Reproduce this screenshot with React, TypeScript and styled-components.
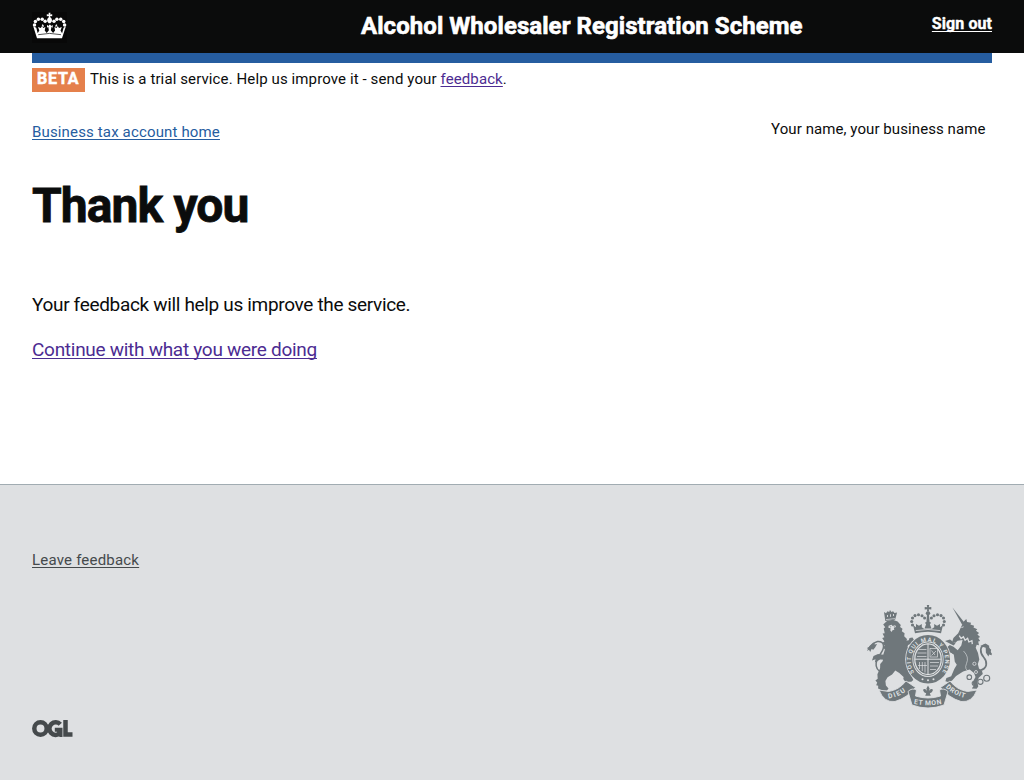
import React from "react";
import styled, { createGlobalStyle } from "styled-components";

const GlobalStyle = createGlobalStyle`
  * { box-sizing: border-box; }
  body {
    margin: 0;
    background: #fff;
    color: #0b0c0c;
    font-family: Roboto, "Liberation Sans", sans-serif;
  }
  h1, p { margin: 0; }
`;

const Page = styled.div`
  display: flex;
  flex-direction: column;
  height: 780px;
  overflow: hidden;
`;

const Header = styled.header`
  display: grid;
  grid-template-columns: 329px 1fr auto;
  height: 53px;
  padding: 0 32px;
  background: #0b0c0c;
  color: #fff;
`;

const CrownBox = styled.div`
  width: 35px;
  height: 31px;
  margin-top: 12px;
  background: #080808;
`;

const ServiceName = styled.div`
  font-size: 24px;
  font-weight: 700;
  line-height: 30px;
  padding-top: 11px;
  white-space: nowrap;
  letter-spacing: 0.06px;
  -webkit-text-stroke: 0.6px currentColor;
`;

const Link = styled.a<{ $color: string }>`
  color: ${(p) => p.$color};
  text-decoration: underline;
  text-decoration-thickness: 1px;
  text-underline-offset: 2px;
  text-decoration-skip-ink: none;
`;

const SignOut = styled.div`
  padding-top: 14px;
  font-size: 16px;
  line-height: 20px;
  font-weight: 700;
  letter-spacing: 0.07px;
  white-space: nowrap;
  -webkit-text-stroke: 0.4px currentColor;
`;

const Main = styled.main`
  height: 431px;
  padding: 0 32px;
`;

const BlueBar = styled.div`
  height: 10px;
  background: #265da0;
`;

const PhaseBanner = styled.div`
  display: flex;
  padding-top: 5px;
  height: 29px;
`;

const PhaseTag = styled.strong`
  width: 53px;
  height: 24px;
  padding-left: 5px;
  background: #e5804b;
  color: #fff;
  font-size: 16px;
  line-height: 22px;
  letter-spacing: 0.8px;
  -webkit-text-stroke: 0.5px currentColor;
`;

const Text = styled.p<{ $size: number; $track: number; $line: number }>`
  font-size: ${(p) => p.$size}px;
  line-height: ${(p) => p.$line}px;
  letter-spacing: ${(p) => p.$track}px;
  white-space: nowrap;
`;

const PhaseText = styled(Text)`
  margin-left: 5px;
`;

const AccountRow = styled.div`
  display: flex;
  justify-content: space-between;
  padding: 27px 6.5px 0 0;
`;

const HomeLink = styled(Text)`
  padding-top: 3px;
`;

const Heading = styled.h1`
  margin-top: 39px;
  font-size: 48px;
  line-height: 50px;
  font-weight: 700;
  letter-spacing: -0.9px;
  -webkit-text-stroke: 0.8px currentColor;
`;

const Body = styled.div`
  display: grid;
  gap: 20px;
  margin-top: 61px;
`;

const Footer = styled.footer`
  flex: 1;
  display: flex;
  justify-content: space-between;
  padding: 63px 31px 0 32px;
  border-top: 1px solid #a1acb2;
  background: #dee0e2;
  color: #454a4c;
`;

const FooterLeft = styled.div`
  display: flex;
  flex-direction: column;
  gap: 147px;
`;

const Arms = styled.svg`
  display: block;
  margin-top: 55px;
`;

const Plain = styled.svg`
  display: block;
`;

function Crown() {
  const pearls = [
    [34.5, 25], [35.4, 21.4], [38.4, 19.3], [42.2, 19.3], [45.1, 21.2],
    [64.6, 25], [63.7, 21.4], [60.7, 19.3], [56.9, 19.3], [54, 21.2],
  ];
  return (
    <Plain width="35" height="31" viewBox="32 12 35 31" fill="#fff">
      {pearls.map(([x, y]) => (
        <circle key={`${x}-${y}`} cx={x} cy={y} r="1.75" />
      ))}
      <path d="M48.6 12.8h1.9l-.3 1.8 2-.3v2l-2-.3.3 1.6a2.5 2.9 0 0 1 .5 5l-.7.7h-1.5l-.7-.7a2.5 2.9 0 0 1 .5-5l.2-1.6-2 .3v-2l2 .3z" />
      <path d="M33.2 26.3l3.8 12h25l3.9-12-2.3 1.4-1.5 5.5-1.6-2.8 1.3-3.4-2.8 1-1.3-2-1.1 2-2.2-.9.7 3.3-2 2.5-2.3-2.6.8-3.8 1.1 1.4v-3l-1.5 1-.8-1.1-1.2-.1-.5 1.2-1.7-1v3l1.2-1.4.7 3.8-2.2 2.6-2-2.5.7-3.3-2.2.9-1.1-2-1.3 2-2.8-1 1.3 3.4-1.6 2.8-1.4-5.5z" />
      <path d="M38.2 34.7q11.4-2.6 22.8 0" fill="none" stroke="#0b0c0c" strokeWidth=".7" />
      <path d="M42.3 24.6l1.2 2M56.8 24.6l-1.2 2" stroke="#fff" strokeWidth="1.4" />
    </Plain>
  );
}

function RoyalArms() {
  const grey = "#6f777b";
  const paper = "#dee0e2";
  const crownPearls = [
    [912.5, 625], [911.7, 621.5], [912.5, 618], [915, 615.6], [918.5, 614.8], [922, 615.8], [924.6, 618],
    [943.5, 625], [944.3, 621.5], [943.5, 618], [941, 615.6], [937.5, 614.8], [934, 615.8], [931.4, 618],
  ];
  return (
    <Arms width="127" height="106" viewBox="866 603 127 106" fill={grey}>
      <defs>
        <path id="garter" d="M914.2 672.500a17.200 19.400 0 1 1 27.600 0" />
        <path id="dieu" d="M888.500 698.500Q900 697 910 688" />
        <path id="mon" d="M913.800 703.800q14.200 3 28.400 0" />
        <path id="droit" d="M945.500 687.500Q955 696.500 968.500 698.500" />
      </defs>

      {/* lion */}
      <path d="M884 612l2 1.300 1.500-2 1.700.8.800-2 1.400 1.900 1.700-.8 1.400 1.800 2.600-.5-2 7.200-9.800 1.200z" />
      <path d="M887.500 615v2M890.500 614.300v2.500M893.500 614v2" stroke={paper} strokeWidth=".9" />
      <path d="M886 619.600l9-1" stroke={paper} strokeWidth=".7" />
      <path d="M887 621l5.800-1.300 4.800 1.800 3.200 3.400-.7 2.100 2.400 1.800-.7 2.500 2.800 2-.4 3 2.800 2.700-.7 2.700 2 2.400-.8 2.800 1.400 2.500-1.200 3-.9 6 .3 6 1.200 7 3.500 5 1.500 3.500-2 1.900-6-.1-2-2.600.3-2.200-4.300-4-4-2.500-3.200 4-4.500 2.800-2.200 3.700.5 4.500 2.600 3-1.500 2.200-5-.1-3.900-2.100.1-2.700-2-.5 1-2.600-1.800-2.100 2.300-1.800-.3-4.500 2.700-6 .1-4.300 2.600-2.900.5-6.500 1.600-5-2-2.200 1.800-1.500-2.300-3 2-1.300-2.200-3.600 2.200-.7-1.800-3.800 2.100-.2-1-4.700 1.500-1.200-2-2.800z" />
      <path d="M888.600 625.800l3-1 1 1.200 2.600-.8.800 1.700-2.200.9.500 2-1.800.4-.9 1.900-1.300-1.500.3-2.300-2.200-.5z" fill={paper} />
      <path d="M889.600 626.500h1.800l-.8 1zM893.500 626.400l1.600-.2-.8 1z" />
      <path d="M885.500 655l-7.500-1-4.500 2-1.500 4.500 3.500-1.200-.6 3.200 5.200-3 5 .3M905 646l6-2 3-4-1.500-2.500-3 .5-.7 2.200-5.500 1z" />
      <path d="M882.600 673C871.500 668 877 659 881 653s3.500-12-3.500-11.500c-5 .8-5.500 5.800-10 7" fill="none" stroke={grey} strokeWidth="1.500" />
      <path d="M867 651l2.500-5 4-3.700 1.300 2.300 2.300-.7-2 3.600-1.800 2.300-1.700-.7-1.400 2.800-1.200-2.200z" />

      {/* unicorn */}
      <path d="M952.500 607.500l12.200 15.500-2.500 1.800z" />
      <path d="M963.500 621.700l2.800-2.700.8 3 4 .7-.7 1.800 3.700 1.300-.6 1.800 3.800 1.700-1.400 1.500 3.200 2.200-1.700 1.400 2.700 2.700-1.800.8 1.800 3-1.900.6.800 3.800-2.300-.5-1 3 2.300 5.200 1.300 6.500-1.500 4.500 1.200 4.600 3 2.300.8 3.100-4.100 3.700-1.300 4.200.9 4.600-1.700 2.300-4.800-.2 1.700-2.500-.7-4.200 2.700-5-1.500-3.900-4.400-3.400-6.500 2-7 4.500-4 4.300-3.200 1.800-3.500-1 1-3.300 4.800-1.700 3.100-7.300 2.500-4.100-2-3-1-7.200-3-2.200-4-1.200-1-3 4-3.200 3.700 1.700 4.200 3.500 3.600-4.600 1.300-5.500-5 .6-2.500 2.300-2.800-1.600 1.100-3.400 4.800-4.800z" />
      <path d="M961.400 627.600l2.200-.8" stroke={paper} strokeWidth=".9" />
      <path d="M959.300 635.700l1.800 2.800 2.300-1.800 1.700 3.500 2.500-1.900 1.300 3.700 3-1.300.4 3.400" fill="none" stroke={paper} strokeWidth="1.300" />
      <path d="M963.500 651q6 6 3 12.500t4 8.500" fill="none" stroke={paper} strokeWidth=".6" />
      <path d="M944 650l5-3 6 3 3 4-3 1-5-3-3 1zM945 641l5-1.500 5.500 4-2 2z" />
      <path d="M979.700 670.500c8-1.800 8-8.500 4-13.200s-4.500-12.200 2.200-12c4.600.2 1.400 6.500 5.400 9" fill="none" stroke={grey} strokeWidth="1.700" />
      <path d="M980.200 646l5.200-2.500 4 2.400-.8 1.600 2.600 2.200-.5 1.600 1.200 4-2.700-.9-.8 2-2.500-3.600-.2-5z" />
      <g fill="none" stroke={paper} strokeWidth=".8">
        <circle cx="974.400" cy="663.800" r="1.600" />
        <circle cx="976" cy="672" r="1.500" />
      </g>

      {/* crown */}
      <path d="M926.800 605h2.400l-.4 2.300 2.500-.4v2.700l-2.500-.4.3 2.400h-2.200l.3-2.400-2.500.4v-2.700l2.500.4z" />
      <ellipse cx="928" cy="613.300" rx="2.200" ry="2" />
      <path d="M927 614.500h2l.6 7.500 1.500.7-1.200 1.500 1.600 4.300h-7l1.600-4.300-1.200-1.500 1.500-.7z" />
      {crownPearls.map(([x, y]) => (
        <circle key={`${x}-${y}`} cx={x} cy={y} r="1.550" />
      ))}
      <path d="M913 625l3 2.300v-3.200l3 1.600 2.800-1.600v3.200l2.500 1.600h7.400l2.500-1.600v-3.200l2.800 1.600 3-1.600v3.200l3-2.300-2 8.300q-13-3-26 0z" />
      <path d="M915.800 630.600q12.200-2.300 24.400 0" fill="none" stroke={paper} strokeWidth=".8" />

      {/* garter and shield */}
      <ellipse cx="928" cy="659.200" rx="22.800" ry="25.200" fill={paper} />
      <ellipse cx="928" cy="659.200" rx="18.800" ry="21" fill="none" stroke={grey} strokeWidth="6.400" />
      <text fontSize="5.800" fontWeight="700" fontFamily="Roboto, sans-serif" fill={paper}>
        <textPath href="#garter" textLength="81">SOIT QUI MAL Y PENSE</textPath>
      </text>
      <ellipse cx="928" cy="659.200" rx="14.300" ry="16.500" fill="none" stroke={grey} strokeWidth=".9" />
      <ellipse cx="928" cy="659.200" rx="12.600" ry="14.800" />
      <path d="M928 644v30M915 659.200h26" stroke={paper} strokeWidth="1" />
      <g stroke={paper} strokeWidth=".7" fill="none">
        <path d="M918.500 649.500h8M917.500 653h9M917 656.500h9.500M919.500 662v7M922.300 662v9M925 662v10.500M918 665.500h9" />
        <rect x="930" y="648.500" width="7.500" height="8.500" />
        <path d="M931.500 655.500l4.500-4.500M931.500 650.500l3.500 4.500M930 662.500h9M930 666h8M930 669.500h6" />
      </g>
      <circle cx="922.500" cy="679.300" r="1" fill={paper} />
      <circle cx="928" cy="680.200" r="1" fill={paper} />
      <circle cx="933.500" cy="679.300" r="1" fill={paper} />

      {/* motto ribbon */}
      <g stroke={paper} strokeWidth=".9">
        <path d="M879 690L888.500 691.500Q899 690 906 681L915.500 687.500Q907 698 895 701.500Q884 703 879 690Z" />
        <path d="M977 690L967.500 691.500Q957 690 950 681L940.500 687.500Q949 698 961 701.500Q972 703 977 690Z" />
        <path d="M908 691.500Q912 687.500 916.500 690L915.500 696Q928 700 940.500 696L939.500 690Q944 687.500 948 691.500L944 705Q928 711 912 705Z" />
      </g>
      <path d="M928 685.500l1.600 3-.7 2.600q1.300-2.800 3.300-2 1.600 1.300-.7 3.300l-1.700.8 1 2.600h-5.600l1-2.600-1.700-.8q-2.300-2-.7-3.300 2-.8 3.300 2l-.7-2.600z" />
      <g fontSize="6.800" fontWeight="700" fontFamily="Roboto, sans-serif" fill={paper}>
        <text><textPath href="#dieu" textLength="19">DIEU</textPath></text>
        <text><textPath href="#mon" textLength="28">ET MON</textPath></text>
        <text><textPath href="#droit" textLength="22">DROIT</textPath></text>
      </g>

      {/* chain */}
      <g fill="none" stroke={grey} strokeWidth="1.100">
        <circle cx="969.300" cy="677.200" r="2.300" />
        <circle cx="974.200" cy="683.200" r="2" />
        <circle cx="980.400" cy="681.800" r="2.600" />
        <circle cx="986.700" cy="678.300" r="3" />
      </g>
    </Arms>
  );
}

function OglLogo() {
  return (
    <Plain width="41" height="18" viewBox="0 0 41 18" fill="none" stroke="#454a4c" strokeWidth="4.500">
      <circle cx="8.500" cy="8.500" r="6.200" />
      <path d="M28.300 4.300A6.300 6.300 0 1 0 28 13.200" />
      <path d="M22.800 7.700h7.700v9.300h-3l-1-2.300-1.600-2.900h-2.100z" fill="#454a4c" stroke="none" />
      <path d="M33.500 0V14.500H40.500" />
    </Plain>
  );
}

export default function App() {
  return (
    <Page>
      <GlobalStyle />
      <Header>
        <CrownBox><Crown /></CrownBox>
        <ServiceName>Alcohol Wholesaler Registration Scheme</ServiceName>
        <SignOut><Link $color="#fff">Sign out</Link></SignOut>
      </Header>
      <Main>
        <BlueBar />
        <PhaseBanner>
          <PhaseTag>BETA</PhaseTag>
          <PhaseText $size={15} $line={22} $track={0.11}>
            This is a trial service. Help us improve it - send your <Link $color="#4c2c92">feedback</Link>.
          </PhaseText>
        </PhaseBanner>
        <AccountRow>
          <HomeLink $size={15} $line={20} $track={0.15}>
            <Link $color="#265da0">Business tax account home</Link>
          </HomeLink>
          <Text $size={15} $line={20} $track={0.08}>Your name, your business name</Text>
        </AccountRow>
        <Heading>Thank you</Heading>
        <Body>
          <Text $size={19} $line={25} $track={-0.33}>Your feedback will help us improve the service.</Text>
          <Text $size={19} $line={25} $track={-0.28}>
            <Link $color="#4c2c92">Continue with what you were doing</Link>
          </Text>
        </Body>
      </Main>
      <Footer>
        <FooterLeft>
          <Text $size={15} $line={25} $track={0.2}><Link $color="#454a4c">Leave feedback</Link></Text>
          <OglLogo />
        </FooterLeft>
        <RoyalArms />
      </Footer>
    </Page>
  );
}
